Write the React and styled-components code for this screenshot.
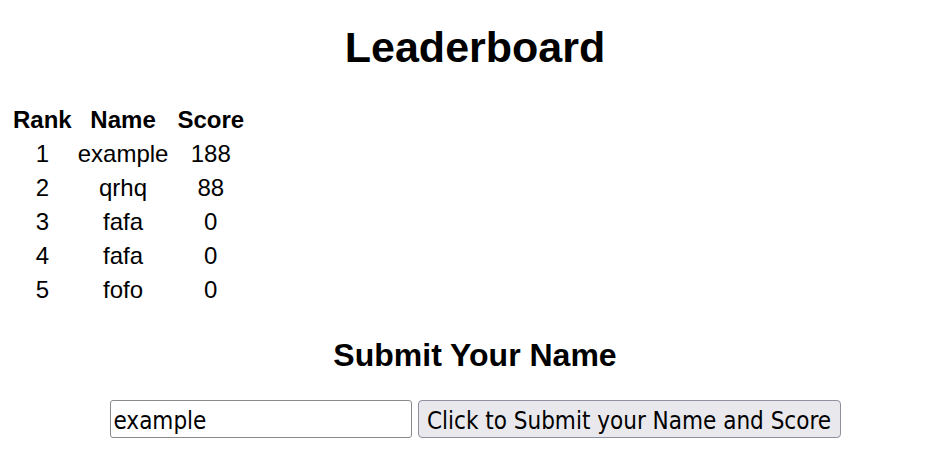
import React from "react";
import styled, { createGlobalStyle } from "styled-components";

const GlobalStyle = createGlobalStyle`
  html, body {
    margin: 0;
    padding: 0;
    background: #ffffff;
    overflow: hidden;
  }
  body {
    font-family: "Liberation Sans", Arial, sans-serif;
    color: #000000;
  }
`;

const Page = styled.main`
  width: 934px;
  margin-left: 8px;
  padding-top: 23px;
  display: flex;
  flex-direction: column;
`;

const Title = styled.h1`
  margin: 0;
  text-align: center;
  font-size: 43px;
  line-height: 49px;
  font-weight: 700;
`;

const Board = styled.table`
  margin: 31px 0 0 2px;
  border-collapse: separate;
  border-spacing: 0;
  font-family: "Liberation Sans", Arial, sans-serif;
  font-size: 24px;
  line-height: 28px;
  align-self: flex-start;
`;

const HeadCell = styled.th`
  padding: 3px 3px 3px ${(p) => (p.$wide ? 6 : 3)}px;
  font-weight: 700;
  text-align: center;
`;

const Cell = styled.td`
  padding: 3px 3px 3px ${(p) => (p.$wide ? 6 : 3)}px;
  text-align: center;
`;

const SubTitle = styled.h2`
  margin: 30px 0 0;
  text-align: center;
  font-size: 32px;
  line-height: 37px;
  font-weight: 700;
`;

const Form = styled.form`
  margin-top: 26px;
  display: flex;
  justify-content: center;
  gap: 6px;
`;

const NameInput = styled.input`
  box-sizing: border-box;
  width: 302px;
  height: 38px;
  padding: 4px 3px 0;
  border: 1px solid #8a8a8a;
  border-radius: 3px;
  background: #ffffff;
  font-family: "DejaVu Sans Condensed", "DejaVu Sans", sans-serif;
  font-size: 24px;
  color: #000000;
  outline: none;
`;

const SubmitButton = styled.button`
  box-sizing: border-box;
  width: 423px;
  height: 38px;
  padding: 4px 8px 0;
  border: 1px solid #8f8f9d;
  border-radius: 4px;
  background: #e9e9ed;
  font-family: "DejaVu Sans Condensed", "DejaVu Sans", sans-serif;
  font-size: 24px;
  color: #000000;
  white-space: nowrap;
`;

const rows = [
  { rank: 1, name: "example", score: 188 },
  { rank: 2, name: "qrhq", score: 88 },
  { rank: 3, name: "fafa", score: 0 },
  { rank: 4, name: "fafa", score: 0 },
  { rank: 5, name: "fofo", score: 0 },
];

export default function App() {
  return (
    <>
      <GlobalStyle />
      <Page>
        <Title>Leaderboard</Title>
        <Board>
          <thead>
            <tr>
              <HeadCell>Rank</HeadCell>
              <HeadCell>Name</HeadCell>
              <HeadCell $wide>Score</HeadCell>
            </tr>
          </thead>
          <tbody>
            {rows.map((r) => (
              <tr key={r.rank}>
                <Cell>{r.rank}</Cell>
                <Cell>{r.name}</Cell>
                <Cell $wide>{r.score}</Cell>
              </tr>
            ))}
          </tbody>
        </Board>
        <SubTitle>Submit Your Name</SubTitle>
        <Form onSubmit={(e) => e.preventDefault()}>
          <NameInput type="text" defaultValue="example" />
          <SubmitButton type="submit">Click to Submit your Name and Score</SubmitButton>
        </Form>
      </Page>
    </>
  );
}
